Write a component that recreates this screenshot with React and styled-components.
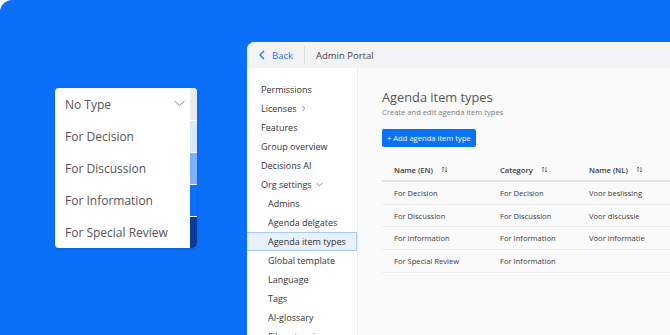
import React from "react";
import styled, { createGlobalStyle } from "styled-components";

const Global = createGlobalStyle`
  html, body { margin: 0; padding: 0; background: #ffffff; }
  body { font-family: "Open Sans", "Liberation Sans", sans-serif; }
  * { box-sizing: border-box; }
`;

const Page = styled.div`
  width: 670px;
  height: 335px;
  background: #0a6ff9;
  border-top-left-radius: 12px;
  overflow: hidden;
  display: flex;
  align-items: flex-start;
  padding-left: 55px;
  gap: 50px;
`;

const Dropdown = styled.div`
  margin-top: 88px;
  flex: 0 0 142px;
  background: #fff;
  border-radius: 4px;
  overflow: hidden;
  display: flex;
  flex-direction: column;
  box-shadow: 0 1px 3px rgba(0, 0, 0, 0.15);
`;

const Option = styled.div`
  height: 32px;
  flex-shrink: 0;
  display: flex;
  align-items: center;
  padding-left: 10px;
  font-size: 12px;
  color: #555;
  white-space: nowrap;
  position: relative;
  border-right: 7px solid ${(p) => p.$swatch};
  &::after {
    content: "";
    position: absolute;
    right: -7px;
    top: 0;
    width: 7px;
    height: 1px;
    background: ${(p) => (p.$first ? "transparent" : "#fff")};
  }
`;

const Chevron = styled.svg`
  position: absolute;
  right: 5px;
  top: 12px;
`;

const Panel = styled.div`
  margin-top: 42px;
  flex: 0 0 460px;
  height: 293px;
  background: #fff;
  border-top-left-radius: 8px;
  overflow: hidden;
  display: flex;
  flex-direction: column;
`;

const TopBar = styled.div`
  height: 26px;
  background: #f2f3f5;
  display: flex;
  align-items: center;
  padding-left: 12px;
  font-size: 9.5px;
  flex-shrink: 0;
`;

const BackLink = styled.div`
  display: flex;
  align-items: center;
  gap: 7px;
  color: #1f74f0;
  padding-right: 11px;
  height: 18px;
  border-right: 1px solid #dcdde0;
`;

const PortalTitle = styled.div`
  padding-left: 11px;
  color: #444;
`;

const Body = styled.div`
  flex: 1;
  display: flex;
  min-height: 0;
`;

const Sidebar = styled.div`
  width: 111px;
  flex-shrink: 0;
  border-right: 1px solid #ececec;
  padding-top: 12px;
  display: flex;
  flex-direction: column;
  overflow: hidden;
`;

const NavItem = styled.div`
  height: 19px;
  flex-shrink: 0;
  display: flex;
  align-items: center;
  gap: 4px;
  padding-left: ${(p) => (p.$sub ? 21 : 14)}px;
  font-size: 9px;
  color: #333;
  white-space: nowrap;
  background: ${(p) => (p.$active ? "#e8f1fe" : "transparent")};
  border: 1px solid ${(p) => (p.$active ? "#a9c9f3" : "transparent")};
  border-left: none;
`;

const Content = styled.div`
  flex: 1;
  background: #fafafa;
  padding: 19px 0 0 24px;
  display: flex;
  flex-direction: column;
`;

const Title = styled.h1`
  margin: 0;
  font-size: 12.8px;
  font-weight: 400;
  color: #555;
  line-height: 20px;
`;

const Subtitle = styled.div`
  font-size: 7.6px;
  color: #7a7a7a;
  line-height: 11px;
`;

const AddButton = styled.button`
  margin-top: 11px;
  align-self: flex-start;
  height: 18px;
  padding: 0 5px;
  background: #0a72f6;
  color: #fff;
  border: none;
  border-radius: 2px;
  font-family: inherit;
  font-size: 7.6px;
`;

const Table = styled.div`
  margin-top: 12px;
  display: flex;
  flex-direction: column;
`;

const Row = styled.div`
  display: grid;
  grid-template-columns: 106px 89px 1fr;
  height: ${(p) => (p.$head ? 23 : 22.7)}px;
  align-items: center;
  border-bottom: ${(p) => (p.$head ? "2px solid #e2e2e2" : "1px solid #ececec")};
  font-size: 7.6px;
  color: #3a3a3a;
  font-weight: ${(p) => (p.$head ? 600 : 400)};
`;

const Cell = styled.div`
  padding-left: 12px;
  display: flex;
  align-items: center;
  gap: 8px;
  white-space: nowrap;
`;

const SortIcon = () => (
  <svg width="7" height="7" viewBox="0 0 7 7" fill="none" stroke="#666" strokeWidth="0.8">
    <path d="M2 6V1M0.8 2.2L2 1l1.2 1.2M5 1v5M3.8 4.8L5 6l1.2-1.2" />
  </svg>
);

const options = [
  { label: "No Type", swatch: "#ebebeb" },
  { label: "For Decision", swatch: "#dbe8fd" },
  { label: "For Discussion", swatch: "#7db2fb" },
  { label: "For Information", swatch: "#0a6ff9" },
  { label: "For Special Review", swatch: "#0b3c9a" },
];

const nav = [
  { label: "Permissions" },
  { label: "Licenses", chev: "right" },
  { label: "Features" },
  { label: "Group overview" },
  { label: "Decisions AI" },
  { label: "Org settings", chev: "down" },
  { label: "Admins", sub: true },
  { label: "Agenda delgates", sub: true },
  { label: "Agenda item types", sub: true, active: true },
  { label: "Global template", sub: true },
  { label: "Language", sub: true },
  { label: "Tags", sub: true },
  { label: "AI-glossary", sub: true },
  { label: "File extensions", sub: true },
];

const rows = [
  ["For Decision", "For Decision", "Voor beslissing"],
  ["For Discussion", "For Discussion", "Voor discussie"],
  ["For Information", "For Information", "Voor informatie"],
  ["For Special Review", "For Information", ""],
];

export default function App() {
  return (
    <>
      <Global />
      <Page>
        <Dropdown>
          {options.map((o, i) => (
            <Option key={o.label} $swatch={o.swatch} $first={i === 0}>
              {o.label}
              {i === 0 && (
                <Chevron width="11" height="7" viewBox="0 0 11 7" fill="none" stroke="#888" strokeWidth="1">
                  <path d="M0.5 0.8L5.5 5.8L10.5 0.8" />
                </Chevron>
              )}
            </Option>
          ))}
        </Dropdown>
        <Panel>
          <TopBar>
            <BackLink>
              <svg width="6" height="10" viewBox="0 0 6 10" fill="none" stroke="#1f74f0" strokeWidth="1.3">
                <path d="M5 1L1 5l4 4" />
              </svg>
              Back
            </BackLink>
            <PortalTitle>Admin Portal</PortalTitle>
          </TopBar>
          <Body>
            <Sidebar>
              {nav.map((n) => (
                <NavItem key={n.label} $sub={n.sub} $active={n.active}>
                  {n.label}
                  {n.chev === "right" && (
                    <svg width="5" height="7" viewBox="0 0 5 7" fill="none" stroke="#888" strokeWidth="0.9">
                      <path d="M1 0.8L4 3.5 1 6.2" />
                    </svg>
                  )}
                  {n.chev === "down" && (
                    <svg width="7" height="5" viewBox="0 0 7 5" fill="none" stroke="#888" strokeWidth="0.9">
                      <path d="M0.8 1L3.5 4 6.2 1" />
                    </svg>
                  )}
                </NavItem>
              ))}
            </Sidebar>
            <Content>
              <Title>Agenda item types</Title>
              <Subtitle>Create and edit agenda item types</Subtitle>
              <AddButton>+ Add agenda item type</AddButton>
              <Table>
                <Row $head>
                  <Cell>Name (EN) <SortIcon /></Cell>
                  <Cell>Category <SortIcon /></Cell>
                  <Cell>Name (NL) <SortIcon /></Cell>
                </Row>
                {rows.map((r) => (
                  <Row key={r[0]}>
                    {r.map((c, i) => (
                      <Cell key={i}>{c}</Cell>
                    ))}
                  </Row>
                ))}
              </Table>
            </Content>
          </Body>
        </Panel>
      </Page>
    </>
  );
}
